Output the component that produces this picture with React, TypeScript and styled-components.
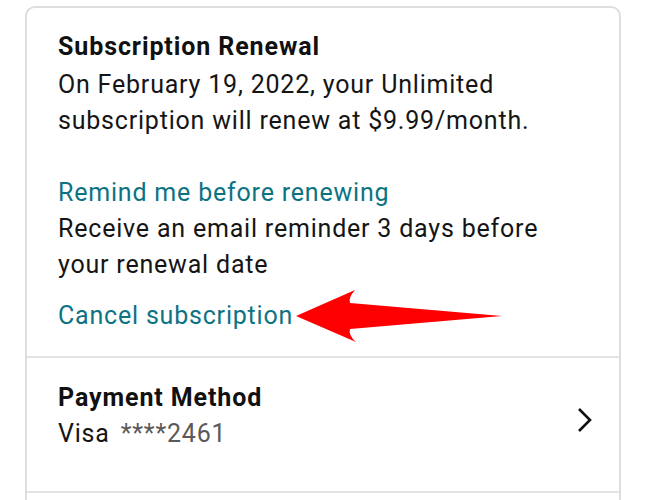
import React from "react";
import styled, { createGlobalStyle } from "styled-components";

const Global = createGlobalStyle`
  html, body { margin: 0; padding: 0; background: #ffffff; }
  body { font-family: Roboto, "Noto Sans", sans-serif; color: #1a1a1a; -webkit-font-smoothing: antialiased; }
`;

const Page = styled.div`
  position: relative;
  width: 646px;
  height: 500px;
  overflow: hidden;
  padding: 6px 0 0 25px;
  box-sizing: border-box;
`;

const Card = styled.div`
  width: 596px;
  border: 2px solid #dedede;
  border-radius: 10px;
  box-sizing: border-box;
  background: #fff;
`;

const Section = styled.div<{ $pt: number; $pb: number }>`
  padding: ${(p) => p.$pt}px 31px ${(p) => p.$pb}px 31px;
  border-bottom: 2px solid #e3e3e3;
`;

const Row = styled(Section)`
  display: flex;
  align-items: center;
  justify-content: space-between;
  padding-right: 24px;
`;

const Title = styled.div<{ $mb?: number }>`
  font-size: 25px;
  line-height: 36px;
  letter-spacing: 0.9px;
  font-weight: 700;
  color: #111;
  margin-bottom: ${(p) => p.$mb ?? 0}px;
`;

const Text = styled.div<{ $mt?: number }>`
  font-size: 25px;
  line-height: 36px;
  letter-spacing: 0.8px;
  color: #151515;
  margin-top: ${(p) => p.$mt ?? 0}px;
`;

const Link = styled.a<{ $mt?: number }>`
  display: block;
  font-size: 25px;
  line-height: 36px;
  letter-spacing: 0.8px;
  color: #0d7382;
  text-decoration: none;
  margin-top: ${(p) => p.$mt ?? 0}px;
`;

const Masked = styled.span`
  color: #5a5a5a;
  margin-left: 11px;
`;

const Chevron = styled.svg`
  width: 20px;
  height: 28px;
  margin-top: 8px;
  flex-shrink: 0;
`;

const Arrow = styled.svg`
  position: absolute;
  left: 291px;
  top: 285px;
  width: 220px;
  height: 64px;
`;

export default function App() {
  return (
    <>
      <Global />
      <Page>
        <Card>
          <Section $pt={21} $pb={22}>
            <Title $mb={2}>Subscription Renewal</Title>
            <Text>
              On February 19, 2022, your Unlimited
              <br />
              subscription will renew at $9.99/month.
            </Text>
            <Link $mt={36}>Remind me before renewing</Link>
            <Text>
              Receive an email reminder 3 days before
              <br />
              your renewal date
            </Text>
            <Link $mt={15}>Cancel subscription</Link>
          </Section>
          <Row $pt={22} $pb={39}>
            <div>
              <Title>Payment Method</Title>
              <Text>
                Visa<Masked>****2461</Masked>
              </Text>
            </div>
            <Chevron viewBox="0 0 20 28">
              <path d="M4 3 L15 14 L4 25" fill="none" stroke="#111" strokeWidth="2.6" />
            </Chevron>
          </Row>
          <Section $pt={20} $pb={20} />
        </Card>
        <Arrow viewBox="0 0 220 64">
          <path
            d="M5 31 L64 5 Q57 13 59 18 L211 31 L59 44 Q57 50 65 57 Z"
            fill="#ff0000"
          />
        </Arrow>
      </Page>
    </>
  );
}
